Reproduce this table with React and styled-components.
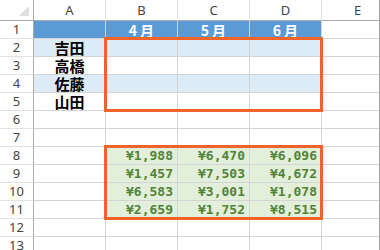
import React from 'react';
import styled, { createGlobalStyle } from 'styled-components';

const GlobalStyle = createGlobalStyle`
   html, body {
      margin:0;
      padding:0;
      background:#ffffff;
   }
   * { box-sizing:border-box; }
`;

const Sheet = styled.div`
   width:380px;
   height:250px;
   overflow:hidden;
   position:relative;
   border-right:1px solid #a6a6a6;
   display:grid;
   grid-template-columns:34px repeat(5, 72px);
   grid-template-rows:21px repeat(13, 18px);
   font-family:"Noto Sans", "Liberation Sans", sans-serif;
   line-height:1;
`;

const Corner = styled.div`
   grid-row:1;
   grid-column:1;
   background:#ffffff;
   border-right:1px solid #ababab;
   border-bottom:1px solid #ababab;
   position:relative;

   &::after{
      content:'';
      position:absolute;
      right:4px;
      bottom:4px;
      width:0;
      height:0;
      border-left:10px solid transparent;
      border-bottom:10px solid #dfdfdf;
   }
`;

const ColHead = styled.div`
   grid-row:1;
   grid-column:${p => p.$col};
   background:#ffffff;
   border-right:1px solid #e1e1e1;
   border-bottom:1px solid #ababab;
   display:flex;
   align-items:center;
   justify-content:center;
   font-size:13px;
   color:#444444;
   padding-top:1px;
`;

const RowHead = styled.div`
   grid-column:1;
   grid-row:${p => p.$row};
   background:#ffffff;
   border-right:1px solid #ababab;
   border-bottom:1px solid #e1e1e1;
   display:flex;
   align-items:center;
   justify-content:center;
   font-size:13px;
   color:#444444;
   overflow:hidden;
`;

const Cell = styled.div`
   grid-row:${p => p.$row};
   grid-column:${p => p.$col};
   background:${p => p.$bg || '#ffffff'};
   border-right:1px solid #d4d4d4;
   border-bottom:1px solid #d4d4d4;
   display:flex;
   align-items:center;
   justify-content:${p => p.$align || 'center'};
   padding:0 4px;
   white-space:nowrap;
   overflow:hidden;
`;

const Month = styled.span`
   font-family:"Noto Sans CJK JP", sans-serif;
   font-weight:700;
   font-size:14px;
   line-height:1;
   color:#ffffff;
   letter-spacing:3px;
   margin-right:-3px;
`;

const Name = styled.span`
   font-family:"Noto Sans CJK JP", sans-serif;
   font-weight:700;
   font-size:15px;
   line-height:1;
   color:#000000;
`;

const Money = styled.span`
   font-family:"DejaVu Sans Mono", "Noto Sans CJK JP", monospace;
   font-weight:700;
   font-size:13px;
   line-height:1;
   color:#548235;
`;

const Selection = styled.div`
   grid-row:${p => p.$rows};
   grid-column:3 / 6;
   margin:-2px -1px -1px -2px;
   border:3px solid #f0642a;
   z-index:2;
   pointer-events:none;
`;

const letters = ['A', 'B', 'C', 'D', 'E'];
const months = ['4月', '5月', '6月'];
const names = ['吉田', '高橋', '佐藤', '山田'];
const sales = [
   ['¥1,988', '¥6,470', '¥6,096'],
   ['¥1,457', '¥7,503', '¥4,672'],
   ['¥6,583', '¥3,001', '¥1,078'],
   ['¥2,659', '¥1,752', '¥8,515'],
];

const BLUE = '#5b9bd5';
const LIGHT_BLUE = '#ddebf7';
const GREEN = '#e2efda';

function rowCells(r) {
   const gridRow = r + 1;
   const cells = [];
   for (let c = 0; c < 5; c++) {
      const gridCol = c + 2;
      const key = `${r}-${c}`;
      if (r === 1 && c < 4) {
         cells.push(
            <Cell key={key} $row={gridRow} $col={gridCol} $bg={BLUE}>
               {c > 0 && <Month>{months[c - 1]}</Month>}
            </Cell>
         );
      } else if (r >= 2 && r <= 5 && c < 4) {
         const bg = r % 2 === 0 ? LIGHT_BLUE : '#ffffff';
         cells.push(
            <Cell key={key} $row={gridRow} $col={gridCol} $bg={bg}>
               {c === 0 && <Name>{names[r - 2]}</Name>}
            </Cell>
         );
      } else if (r >= 8 && r <= 11 && c >= 1 && c <= 3) {
         cells.push(
            <Cell key={key} $row={gridRow} $col={gridCol} $bg={GREEN} $align="flex-end">
               <Money>{sales[r - 8][c - 1]}</Money>
            </Cell>
         );
      } else {
         cells.push(<Cell key={key} $row={gridRow} $col={gridCol} />);
      }
   }
   return cells;
}

export default function App() {
   const rows = Array.from({ length: 13 }, (_, i) => i + 1);
   return (
      <>
         <GlobalStyle />
         <Sheet>
            <Corner />
            {letters.map((l, i) => (
               <ColHead key={l} $col={i + 2}>{l}</ColHead>
            ))}
            {rows.map(r => (
               <React.Fragment key={r}>
                  <RowHead $row={r + 1}>{r}</RowHead>
                  {rowCells(r)}
               </React.Fragment>
            ))}
            <Selection $rows="3 / 7" />
            <Selection $rows="9 / 13" />
         </Sheet>
      </>
   );
}
